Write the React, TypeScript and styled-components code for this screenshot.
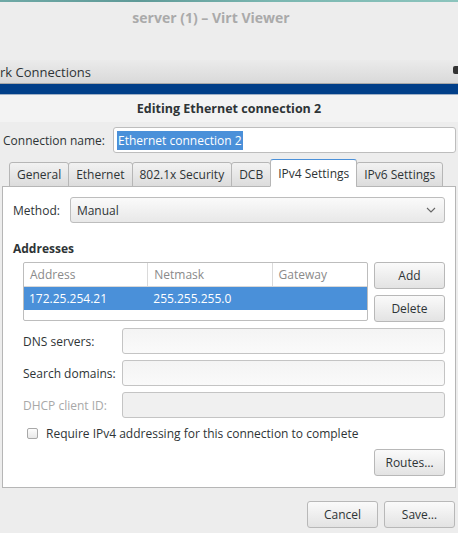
import styled, { createGlobalStyle } from "styled-components";

const GlobalStyle = createGlobalStyle`
  html, body {
    margin: 0;
    padding: 0;
    background: #ededed;
  }
  body {
    font-family: "Open Sans", "DejaVu Sans", sans-serif;
    font-size: 12px;
    color: #2e3436;
  }
`;

const tabs = ["General", "Ethernet", "802.1x Security", "DCB", "IPv4 Settings", "IPv6 Settings"];

export default function App() {
  return (
    <>
      <GlobalStyle />
      <Screen>
        <DesktopStrip />
        <ViewerTitle>server (1) – Virt Viewer</ViewerTitle>
        <ParentTitle>
          <span>rk Connections</span>
          <SpeakerMark />
        </ParentTitle>
        <SelectedStrip />
        <Dialog>
          <DialogHeader>Editing Ethernet connection 2</DialogHeader>
          <NameRow>
            <Label>Connection name:</Label>
            <Entry>
              <Selected>Ethernet connection 2</Selected>
            </Entry>
          </NameRow>
          <TabStrip>
            {tabs.map((t) => (
              <Tab key={t} $active={t === "IPv4 Settings"}>
                {t}
              </Tab>
            ))}
          </TabStrip>
          <Panel>
            <MethodRow>
              <Label>Method:</Label>
              <Combo>
                <span>Manual</span>
                <svg width="10" height="6" viewBox="0 0 10 6">
                  <path d="M1 1 L5 5 L9 1" fill="none" stroke="#666" strokeWidth="1.1" />
                </svg>
              </Combo>
            </MethodRow>
            <SectionTitle>Addresses</SectionTitle>
            <AddressRow>
              <Table>
                <HeadRow>
                  <HeadCell $w={125}>Address</HeadCell>
                  <HeadCell $w={125}>Netmask</HeadCell>
                  <HeadCell $w={95} $last>Gateway</HeadCell>
                </HeadRow>
                <DataRow>
                  <DataCell $w={125}>172.25.254.21</DataCell>
                  <DataCell $w={125}>255.255.255.0</DataCell>
                  <DataCell $w={95}></DataCell>
                </DataRow>
              </Table>
              <ButtonColumn>
                <Button>Add</Button>
                <Button>Delete</Button>
              </ButtonColumn>
            </AddressRow>
            <FieldGrid>
              <Label>DNS servers:</Label>
              <Field />
              <Label>Search domains:</Label>
              <Field />
              <Label $disabled>DHCP client ID:</Label>
              <Field $disabled />
            </FieldGrid>
            <CheckRow>
              <CheckBox />
              <span>Require IPv4 addressing for this connection to complete</span>
            </CheckRow>
            <RoutesRow>
              <Button>Routes…</Button>
            </RoutesRow>
          </Panel>
          <Footer>
            <Button>Cancel</Button>
            <Button>Save…</Button>
          </Footer>
        </Dialog>
      </Screen>
    </>
  );
}

const Screen = styled.div`
  width: 458px;
  height: 533px;
  overflow: hidden;
  background: #ededed;
  display: flex;
  flex-direction: column;
`;

const DesktopStrip = styled.div`
  height: 2px;
  background: linear-gradient(90deg, #6fa9a6 0%, #5f9a98 30%, #7bb7b1 60%, #8cc4bd 100%);
`;

const ViewerTitle = styled.div`
  height: 58px;
  box-sizing: border-box;
  padding-top: 6px;
  padding-right: 36px;
  text-align: center;
  font-weight: 700;
  font-size: 14px;
  color: #aaaaaa;
  background: #ededed;
`;

const ParentTitle = styled.div`
  height: 24px;
  box-sizing: border-box;
  display: flex;
  align-items: center;
  justify-content: space-between;
  background: linear-gradient(#ebebeb, #d9d9d9);
  border-bottom: 1px solid #a9a9a9;
  span {
    font-size: 13px;
    color: #2e3436;
    white-space: nowrap;
  }
`;

const SpeakerMark = styled.div`
  width: 5px;
  height: 8px;
  margin-top: -4px;
  background: #333;
  border-radius: 2px 0 0 2px;
`;

const SelectedStrip = styled.div`
  height: 10px;
  background: #013f89;
  border-bottom: 1px solid #9fb0c6;
`;

const Dialog = styled.div`
  flex: 1;
  display: flex;
  flex-direction: column;
  background: #ededed;
`;

const DialogHeader = styled.div`
  height: 27px;
  display: flex;
  align-items: center;
  justify-content: center;
  font-weight: 700;
  font-size: 12.5px;
  background: #f3f3f3;
`;

const NameRow = styled.div`
  display: flex;
  align-items: center;
  gap: 8px;
  padding: 5px 2px 0 3px;
`;

const Label = styled.span<{ $disabled?: boolean }>`
  white-space: nowrap;
  color: ${(p) => (p.$disabled ? "#a8a8a8" : "#2e3436")};
`;

const Entry = styled.div`
  flex: 1;
  height: 26px;
  box-sizing: border-box;
  border: 1px solid #bdbdbd;
  border-radius: 3px;
  background: #fff;
  display: flex;
  align-items: center;
  padding-left: 3px;
`;

const Selected = styled.span`
  background: #4a90d9;
  color: #fff;
  padding: 1px 1px;
`;

const TabStrip = styled.div`
  display: flex;
  align-items: flex-end;
  padding: 6px 0 0 10px;
  height: 28px;
  margin-bottom: -1px;
  position: relative;
  z-index: 1;
`;

const Tab = styled.div<{ $active?: boolean }>`
  height: ${(p) => (p.$active ? "28px" : "25px")};
  box-sizing: border-box;
  padding: 0 7px;
  display: flex;
  align-items: center;
  white-space: nowrap;
  border: 1px solid #b6b6b6;
  border-bottom: ${(p) => (p.$active ? "1px solid #fff" : "1px solid #b6b6b6")};
  border-top-color: ${(p) => (p.$active ? "#4a90d9" : "#b6b6b6")};
  border-radius: 3px 3px 0 0;
  margin-left: -1px;
  background: ${(p) => (p.$active ? "#fff" : "linear-gradient(#f2f2f2, #dcdcdc)")};
  color: #2e3436;
`;

const Panel = styled.div`
  margin: 0 2px;
  height: 302px;
  box-sizing: border-box;
  background: #fff;
  border: 1px solid #b6b6b6;
  padding: 10px 10px 0 10px;
  display: flex;
  flex-direction: column;
`;

const MethodRow = styled.div`
  display: flex;
  align-items: center;
  gap: 10px;
`;

const Combo = styled.div`
  flex: 1;
  height: 26px;
  box-sizing: border-box;
  border: 1px solid #bdbdbd;
  border-radius: 3px;
  background: linear-gradient(#fafafa, #e8e8e8);
  display: flex;
  align-items: center;
  justify-content: space-between;
  padding: 0 8px 0 6px;
`;

const SectionTitle = styled.div`
  font-weight: 700;
  margin-top: 17px;
  margin-bottom: 5px;
`;

const AddressRow = styled.div`
  display: flex;
  gap: 6px;
  padding-left: 10px;
`;

const Table = styled.div`
  width: 345px;
  height: 59px;
  box-sizing: border-box;
  border: 1px solid #bdbdbd;
  border-radius: 2px;
  background: #fff;
`;

const HeadRow = styled.div`
  display: flex;
  height: 23px;
  border-bottom: 1px solid #d8d8d8;
`;

const HeadCell = styled.div<{ $w: number; $last?: boolean }>`
  width: ${(p) => p.$w}px;
  box-sizing: border-box;
  padding-left: 6px;
  display: flex;
  align-items: center;
  color: #8a8a8a;
  border-right: ${(p) => (p.$last ? "none" : "1px solid #dadada")};
`;

const DataRow = styled.div`
  display: flex;
  height: 23px;
  background: #4a90d9;
  color: #fff;
`;

const DataCell = styled.div<{ $w: number }>`
  width: ${(p) => p.$w}px;
  box-sizing: border-box;
  padding-left: 5px;
  display: flex;
  align-items: center;
`;

const ButtonColumn = styled.div`
  display: flex;
  flex-direction: column;
  gap: 6px;
`;

const Button = styled.div`
  width: 71px;
  height: 27px;
  box-sizing: border-box;
  border: 1px solid #b8b8b8;
  border-radius: 3px;
  background: linear-gradient(#fafafa, #e3e3e3);
  display: flex;
  align-items: center;
  justify-content: center;
  color: #2e3436;
`;

const FieldGrid = styled.div`
  display: grid;
  grid-template-columns: 88px 1fr;
  column-gap: 11px;
  row-gap: 6px;
  align-items: center;
  padding-left: 10px;
  margin-top: 6px;
`;

const Field = styled.div<{ $disabled?: boolean }>`
  height: 26px;
  box-sizing: border-box;
  border: 1px solid #c4c4c4;
  border-radius: 3px;
  background: ${(p) => (p.$disabled ? "#f0f0f0" : "linear-gradient(#f4f4f4, #fafafa)")};
`;

const CheckRow = styled.div`
  display: flex;
  align-items: center;
  gap: 8px;
  padding-left: 14px;
  margin-top: 7px;
`;

const CheckBox = styled.div`
  width: 9px;
  height: 9px;
  border: 1px solid #a8a8a8;
  border-radius: 2px;
  background: linear-gradient(#fdfdfd, #e8e8e8);
`;

const RoutesRow = styled.div`
  display: flex;
  justify-content: flex-end;
  margin-top: 7px;
`;

const Footer = styled.div`
  display: flex;
  justify-content: flex-end;
  gap: 6px;
  padding: 13px 3px 0 0;
`;
